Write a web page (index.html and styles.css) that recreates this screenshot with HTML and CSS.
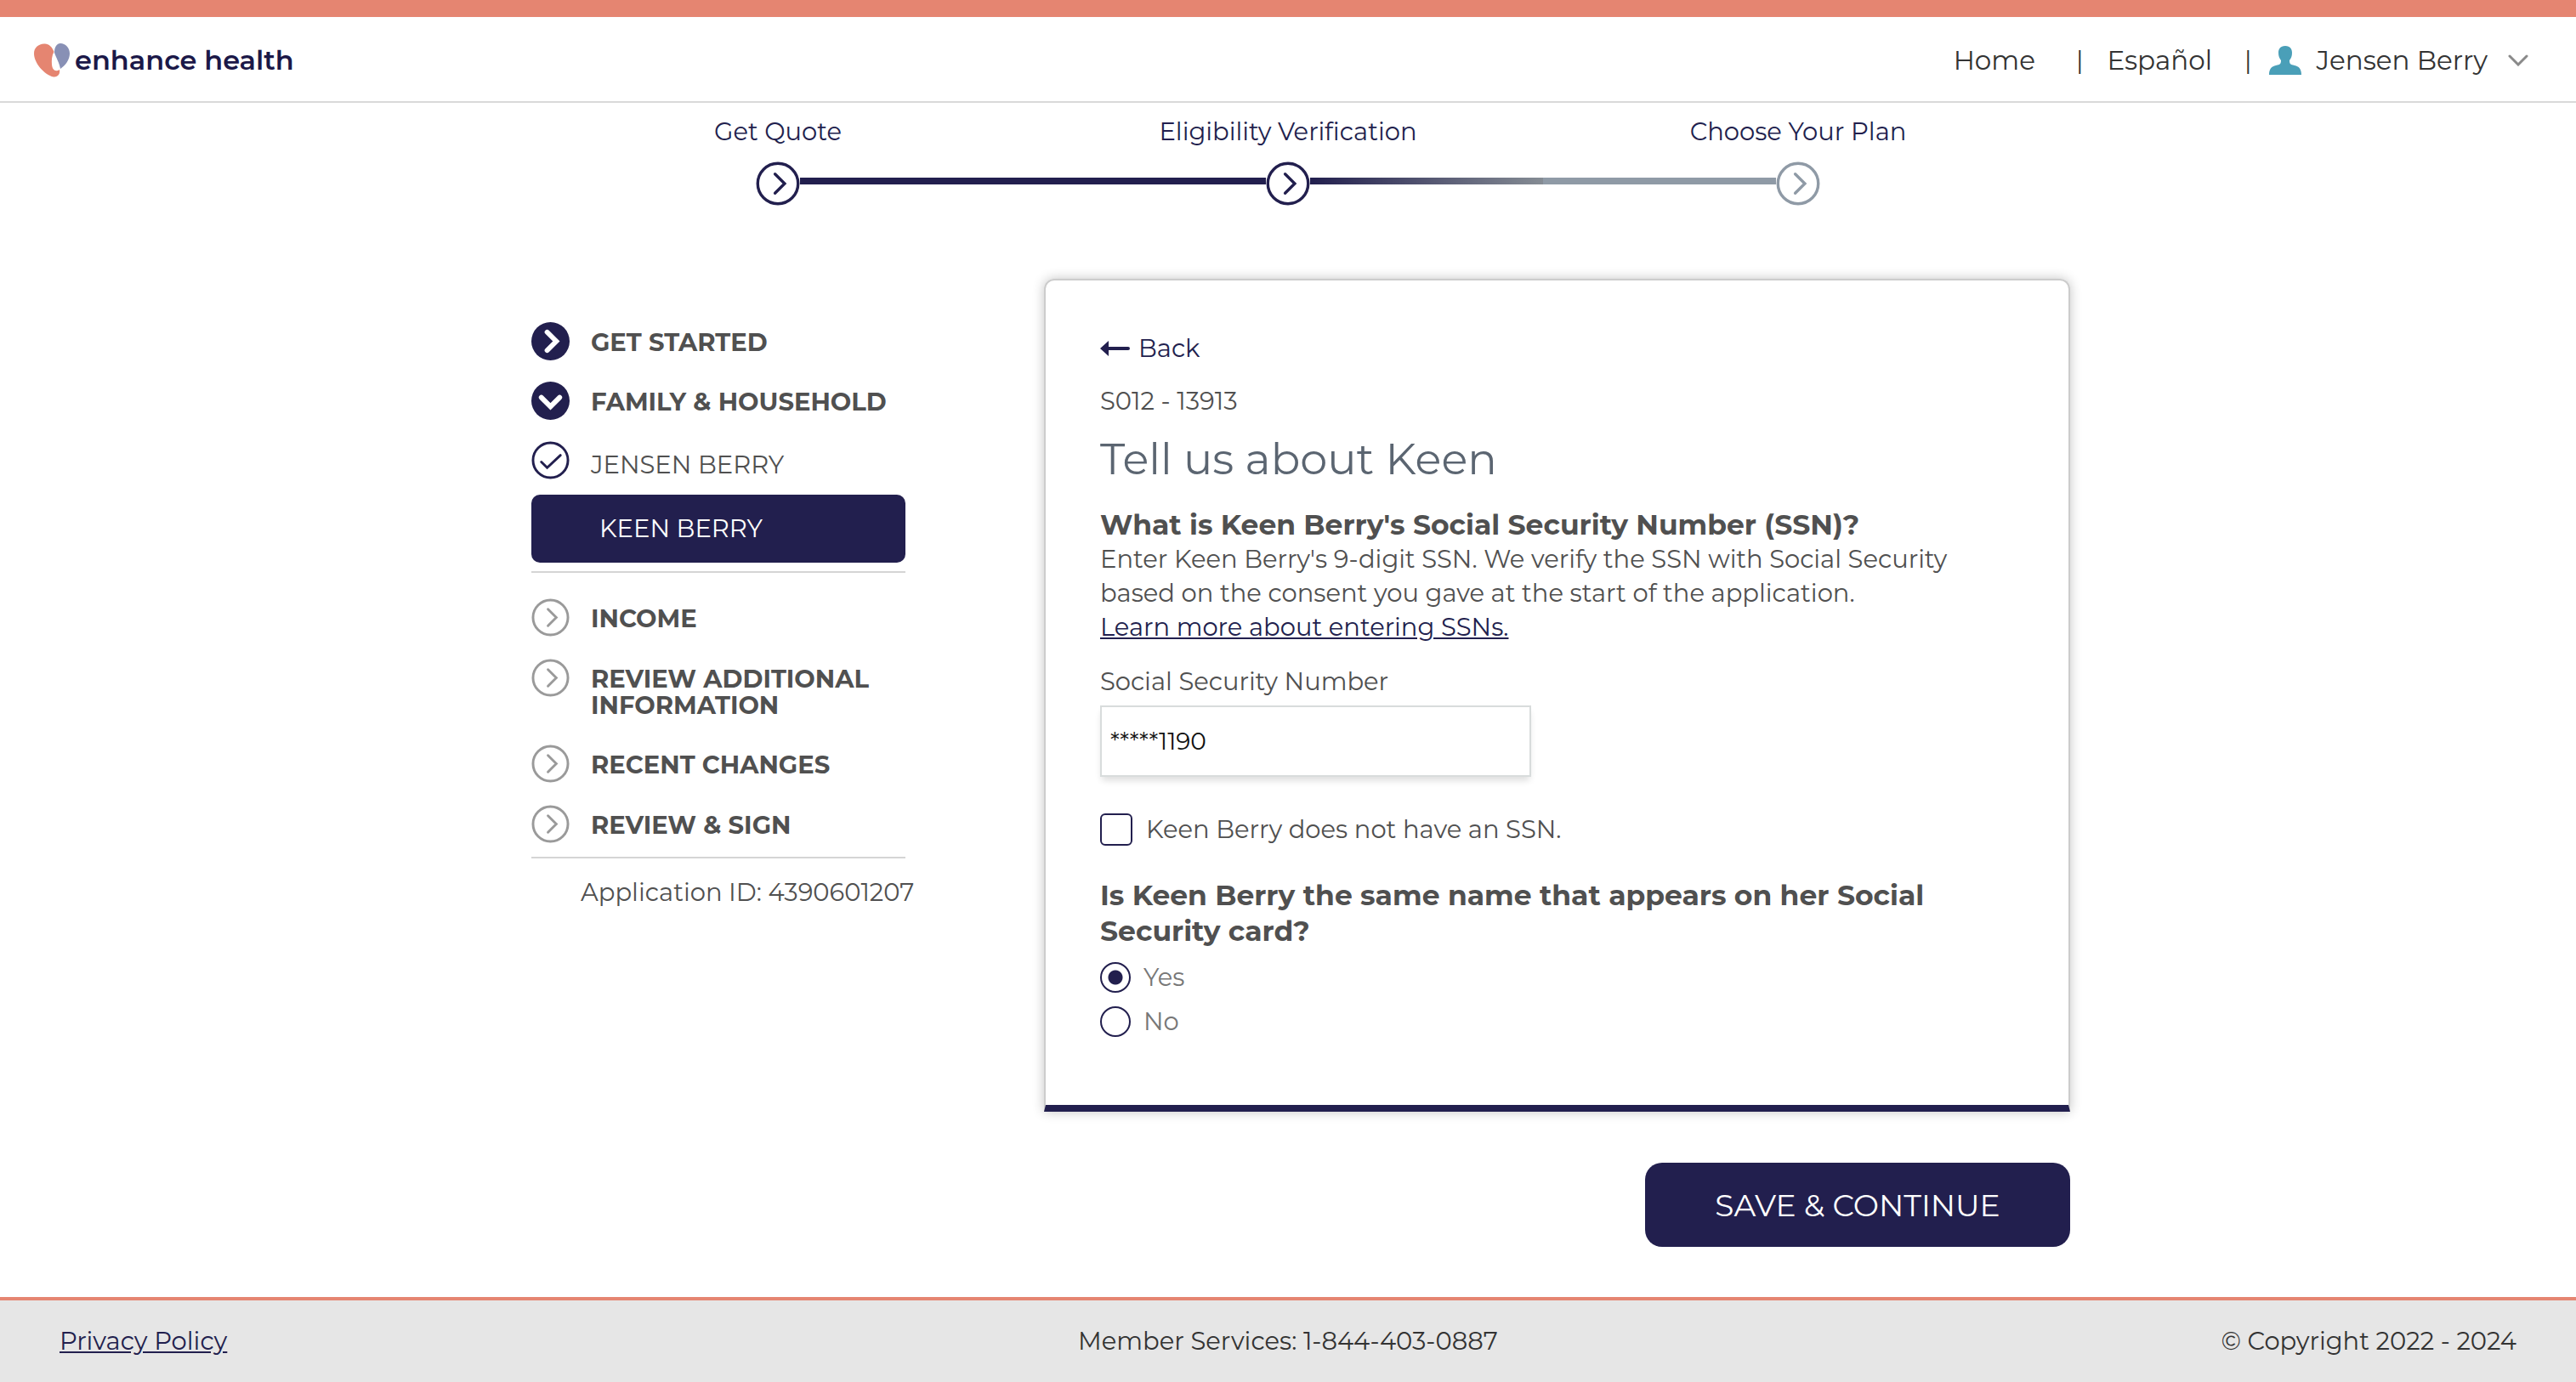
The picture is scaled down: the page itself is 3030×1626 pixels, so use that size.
FILE: index.html
```html
<!DOCTYPE html>
<html lang="en">
<head>
<meta charset="utf-8">
<meta name="viewport" content="width=device-width, initial-scale=1">
<title>Enhance Health - Eligibility Verification</title>
<link rel="stylesheet" href="styles.css">
</head>
<body>
<svg class="sprite" aria-hidden="true">
  <symbol id="ring-right" viewBox="0 0 46 46">
    <circle cx="23" cy="23" r="21" fill="none" stroke="currentColor" stroke-width="3"/>
    <path d="M20 13 L30 23 L20 33" fill="none" stroke="currentColor" stroke-width="3" stroke-linecap="round"/>
  </symbol>
</svg>

<header class="header">
  <a class="brand" href="#">
    <svg class="brand-mark" viewBox="0 0 42 40" aria-hidden="true">
      <path fill="#e58571" d="M12 0.500 C17 0 21.500 4 23.500 10 C21 14 20.500 20 21 25 C21.500 31 25 34 30 31 C31 36 28 40 23 39.500 C12 37 0 23 0 12 C0 5 5 1 12 .5 Z"/>
      <path fill="#8890b5" d="M31 0 C37 0 42 5 42 12 C42 19 37 26 31 30 C30 23 26 17 24 11 C24 4 27 0 31 0 Z"/>
    </svg>
    <span>enhance health</span>
  </a>
  <nav class="nav">
    <a href="#">Home</a>
    <span class="bar bar-home">|</span>
    <a href="#">Español</a>
    <span class="bar bar-lang">|</span>
    <button class="account" type="button">
      <svg class="person" viewBox="0 0 38 34" aria-hidden="true">
        <path fill="#4a9fb8" d="M19 0 C25 0 27 4 27 8 C27 12 26 14 24 17 C24 21 25 22 30 23 C35 24 38 27 38 34 H0 C0 27 3 24 8 23 C13 22 14 21 14 17 C12 14 11 12 11 8 C11 4 13 0 19 0 Z"/>
      </svg>
      <span>Jensen Berry</span>
      <svg class="caret" viewBox="0 0 24 14" aria-hidden="true">
        <path d="M2 2 L12 12 L22 2" fill="none" stroke="#8a8a8a" stroke-width="3" stroke-linecap="round"/>
      </svg>
    </button>
  </nav>
</header>

<ol class="steps">
  <li class="step">
    <span class="step-label">Get Quote</span>
    <svg class="step-icon"><use href="#ring-right"/></svg>
  </li>
  <li class="step step-current">
    <span class="step-label">Eligibility Verification</span>
    <svg class="step-icon"><use href="#ring-right"/></svg>
  </li>
  <li class="step step-next">
    <span class="step-label">Choose Your Plan</span>
    <svg class="step-icon"><use href="#ring-right"/></svg>
  </li>
</ol>

<main class="main">
  <aside class="sidebar">
    <ul class="menu">
      <li><a class="item" href="#">
        <svg class="icon navy" viewBox="0 0 46 46"><circle cx="23" cy="23" r="23" fill="currentColor"/><path d="M19 12 L30 23 L19 34" fill="none" stroke="#fff" stroke-width="6" stroke-linecap="round"/></svg>
        <span>GET STARTED</span></a></li>
      <li><a class="item" href="#">
        <svg class="icon navy" viewBox="0 0 46 46"><circle cx="23" cy="23" r="23" fill="currentColor"/><path d="M12 19 L23 30 L34 19" fill="none" stroke="#fff" stroke-width="6" stroke-linecap="round"/></svg>
        <span>FAMILY &amp; HOUSEHOLD</span></a></li>
      <li><a class="item member" href="#">
        <svg class="icon navy" viewBox="0 0 46 46"><circle cx="23" cy="23" r="21" fill="none" stroke="currentColor" stroke-width="3"/><path d="M12 25 L19 32 L35 17" fill="none" stroke="currentColor" stroke-width="3" stroke-linecap="round"/></svg>
        <span>JENSEN BERRY</span></a></li>
    </ul>
    <a class="selected" href="#">KEEN BERRY</a>
    <ul class="menu menu-todo">
      <li><a class="item" href="#"><svg class="icon gray"><use href="#ring-right"/></svg><span>INCOME</span></a></li>
      <li><a class="item" href="#"><svg class="icon gray"><use href="#ring-right"/></svg><span>REVIEW ADDITIONAL INFORMATION</span></a></li>
      <li><a class="item" href="#"><svg class="icon gray"><use href="#ring-right"/></svg><span>RECENT CHANGES</span></a></li>
      <li><a class="item" href="#"><svg class="icon gray"><use href="#ring-right"/></svg><span>REVIEW &amp; SIGN</span></a></li>
    </ul>
    <p class="app-id">Application ID: 4390601207</p>
  </aside>

  <form class="form">
    <section class="panel">
      <a class="back" href="#">
        <svg class="arrow" viewBox="0 0 35 18" aria-hidden="true"><path fill="#221f4e" d="M0 9 L10 0 V7 H33 Q35 7 35 9 Q35 11 33 11 H10 V18 Z"/></svg>
        <span>Back</span>
      </a>
      <p class="code">S012 - 13913</p>
      <h1 class="title">Tell us about Keen</h1>
      <h2 class="question">What is Keen Berry's Social Security Number (SSN)?</h2>
      <p class="help">Enter Keen Berry's 9-digit SSN. We verify the SSN with Social Security based on the consent you gave at the start of the application.</p>
      <a class="learn" href="#">Learn more about entering SSNs.</a>
      <label class="label" for="ssn">Social Security Number</label>
      <input class="field" id="ssn" type="text" value="*****1190">
      <label class="check"><input type="checkbox"><span>Keen Berry does not have an SSN.</span></label>
      <fieldset class="group">
        <legend class="question">Is Keen Berry the same name that appears on her Social Security card?</legend>
        <label class="radio"><input type="radio" name="same" checked><span>Yes</span></label>
        <label class="radio"><input type="radio" name="same"><span>No</span></label>
      </fieldset>
    </section>
    <button class="save" type="button">SAVE &amp; CONTINUE</button>
  </form>
</main>

<footer class="footer">
  <a href="#">Privacy Policy</a>
  <span>Member Services: 1-844-403-0887</span>
  <span class="copyright">© Copyright 2022 - 2024</span>
</footer>
</body>
</html>
```
FILE: styles.css
```css
:root {
  --navy: #221f4e;
  --coral: #e58571;
  --text: #505050;
  --rule: #d5d5d5;
}

* { box-sizing: border-box; }

body {
  margin: 0;
  min-height: 100vh;
  display: flex;
  flex-direction: column;
  background: #fff;
  color: var(--text);
  font: 400 29px/40px Montserrat, Inter, sans-serif;
}

h1, h2, p, ul, ol { margin: 0; padding: 0; }
ul, ol { list-style: none; }
a { color: inherit; text-decoration: none; }
button, input { font: inherit; color: inherit; }
svg { display: block; flex: none; }
.sprite { position: absolute; width: 0; height: 0; }

/* Header */
.header {
  display: flex;
  justify-content: space-between;
  align-items: center;
  height: 121px;
  padding: 2px 56px 0 40px;
  border-top: 20px solid var(--coral);
  border-bottom: 2px solid #d9d9d9;
}

.brand {
  display: flex;
  align-items: center;
  gap: 6px;
  color: #1b1848;
  font-weight: 600;
  font-size: 32px;
}
.brand-mark { width: 42px; height: 40px; }

.nav {
  display: flex;
  align-items: center;
  color: #333;
  font-size: 31px;
}
.bar { font-size: 29px; }
.bar-home { margin: 0 28px 0 48px; }
.bar-lang { margin: 0 20px 0 38px; }

.account {
  display: flex;
  align-items: center;
  padding: 0;
  border: 0;
  background: none;
}
.person { width: 38px; height: 34px; margin-right: 18px; }
.caret { width: 24px; height: 14px; margin-left: 24px; }

/* Progress */
.steps {
  display: grid;
  grid-template-columns: repeat(3, 1fr);
  width: 100%;
  max-width: 1800px;
  margin: 14px auto 0;
  color: var(--navy);
}
.step {
  position: relative;
  display: flex;
  flex-direction: column;
  align-items: center;
  gap: 15px;
}
.step-icon { width: 52px; height: 52px; }
.step:not(:first-child)::before {
  content: "";
  position: absolute;
  left: calc(-50% + 26px);
  right: calc(50% + 26px);
  top: 74px;
  height: 8px;
  background: var(--navy);
}
.step.step-next::before {
  background: linear-gradient(90deg, var(--navy), #858c94 50%, #8f9aa6 50%);
}
.step-next .step-icon { color: #8f9aa6; }

/* Page body */
.main {
  display: grid;
  grid-template-columns: 440px minmax(0, 1fr);
  gap: 163px;
  width: 100%;
  max-width: 1840px;
  margin: 86px auto 0;
  padding-left: 30px;
}

.sidebar { padding-top: 51px; }
.menu {
  display: flex;
  flex-direction: column;
  gap: 25px;
}
.item {
  display: flex;
  gap: 25px;
  min-height: 45px;
  line-height: 31px;
  font-weight: 700;
}
.item span { padding: 8px 0 5px; }
.member { font-weight: 400; }
.member span { padding-top: 12px; }
.icon { width: 45px; height: 45px; }
.navy { color: var(--navy); }
.gray { color: #9a9a9a; }

.selected {
  display: block;
  margin-top: 15px;
  padding: 20px 80px;
  border-radius: 10px;
  background: var(--navy);
  color: #fff;
}
.menu-todo {
  gap: 26px;
  margin-top: 10px;
  padding: 30px 0 16px;
  border-top: 2px solid var(--rule);
  border-bottom: 2px solid var(--rule);
}
.app-id { padding: 20px 0 0 58px; white-space: nowrap; }

.form {
  display: flex;
  flex-direction: column;
}
.panel {
  display: flex;
  flex-direction: column;
  align-items: flex-start;
  padding: 60px 64px 78px;
  border: 2px solid #ccc;
  border-bottom: 8px solid var(--navy);
  border-radius: 12px 12px 0 0;
  box-shadow: 0 0 14px rgba(0, 0, 0, .24);
}
.back {
  display: flex;
  align-items: center;
  gap: 10px;
  color: var(--navy);
}
.arrow { width: 35px; height: 18px; }
.code { margin-top: 22px; }
.title {
  margin-top: 16px;
  color: #5b6571;
  font-weight: 400;
  font-size: 51px;
  line-height: 64px;
}
.question {
  margin-top: 24px;
  padding: 0;
  font-weight: 700;
  font-size: 33px;
  line-height: 42px;
}
.learn { color: var(--navy); text-decoration: underline; }
.label { margin-top: 24px; }
.field {
  width: 507px;
  max-width: 100%;
  height: 84px;
  margin-top: 8px;
  padding: 0 10px;
  border: 2px solid #d8dcdc;
  box-shadow: 0 6px 8px -2px rgba(0, 0, 0, .14);
  color: #111;
  font-size: 28px;
}

.check, .radio {
  display: flex;
  align-items: center;
}
.check {
  gap: 16px;
  margin-top: 42px;
}
.check input, .radio input {
  appearance: none;
  flex: none;
  margin: 0;
  border: 2px solid var(--navy);
  background: #fff;
}
.check input {
  width: 38px;
  height: 38px;
  border-radius: 6px;
}
.group {
  margin: 36px 0 0;
  padding: 0;
  border: 0;
}
.question + .radio { margin-top: 14px; }
.radio {
  gap: 15px;
  margin-top: 12px;
  color: #777;
}
.radio input {
  width: 36px;
  height: 36px;
  border-radius: 50%;
}
.radio input:checked { background: radial-gradient(circle, var(--navy) 8px, #fff 9px); }

.save {
  align-self: flex-end;
  width: 500px;
  max-width: 100%;
  height: 99px;
  margin-top: 60px;
  border: 0;
  border-radius: 20px;
  background: var(--navy);
  color: #fff;
  font-size: 36px;
}

/* Footer */
.footer {
  display: grid;
  grid-template-columns: 1fr auto 1fr;
  align-items: center;
  height: 100px;
  margin-top: auto;
  padding: 0 70px;
  border-top: 4px solid var(--coral);
  background: #e6e6e6;
  color: #333;
}
.footer a {
  justify-self: start;
  color: var(--navy);
  text-decoration: underline;
}
.copyright { justify-self: end; }
```
